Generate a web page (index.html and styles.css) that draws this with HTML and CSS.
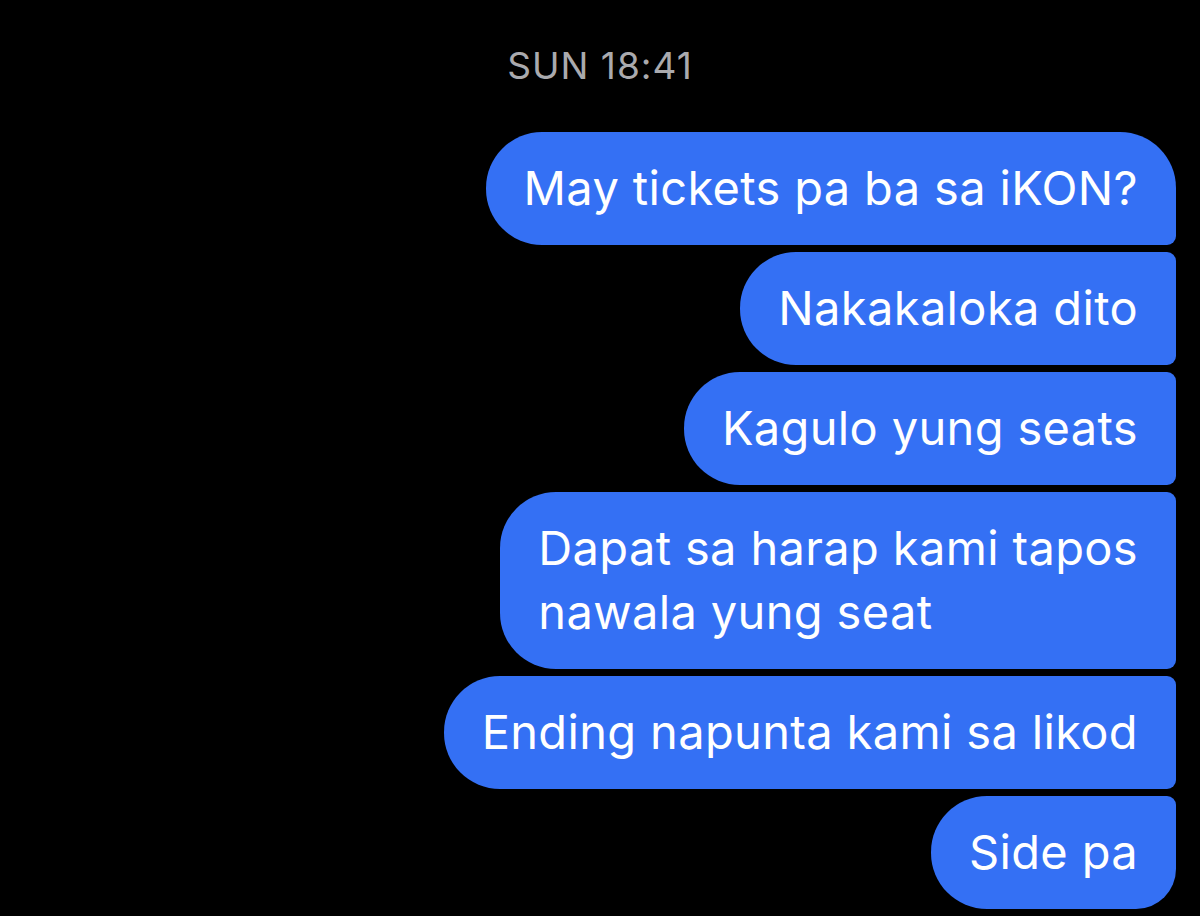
FILE: index.html
```html
<!DOCTYPE html>
<html lang="tl">
<head>
<meta charset="utf-8">
<title>Messages</title>
<link rel="stylesheet" href="styles.css">
</head>
<body>
<div class="thread">
  <div class="timestamp">SUN 18:41</div>
  <div class="messages">
    <div class="bubble first">May tickets pa ba sa iKON?</div>
    <div class="bubble">Nakakaloka dito</div>
    <div class="bubble">Kagulo yung seats</div>
    <div class="bubble">Dapat sa harap kami tapos<br>nawala yung seat</div>
    <div class="bubble">Ending napunta kami sa likod</div>
    <div class="bubble last">Side pa</div>
  </div>
</div>
</body>
</html>
```
FILE: styles.css
```css
html, body {
  margin: 0;
  padding: 0;
  background: #000;
  height: 100%;
  overflow: hidden;
}
.thread {
  display: flex;
  flex-direction: column;
  font-family: Inter, "Liberation Sans", sans-serif;
  padding: 44px 24px 0 24px;
}
.timestamp {
  align-self: center;
  color: #aaaaae;
  font-size: 37px;
  line-height: 44px;
  letter-spacing: 1px;
}
.messages {
  display: flex;
  flex-direction: column;
  align-items: flex-end;
  gap: 7px;
  margin-top: 44px;
}
.bubble {
  background: #3470f4;
  color: #fff;
  font-size: 47px;
  line-height: 64px;
  letter-spacing: 0.35px;
  padding: 24px 38px 25px;
  border-radius: 56px 9px 9px 56px;
  white-space: nowrap;
}
.bubble.first {
  border-top-right-radius: 56px;
}
.bubble.last {
  border-bottom-right-radius: 40px;
}
```
